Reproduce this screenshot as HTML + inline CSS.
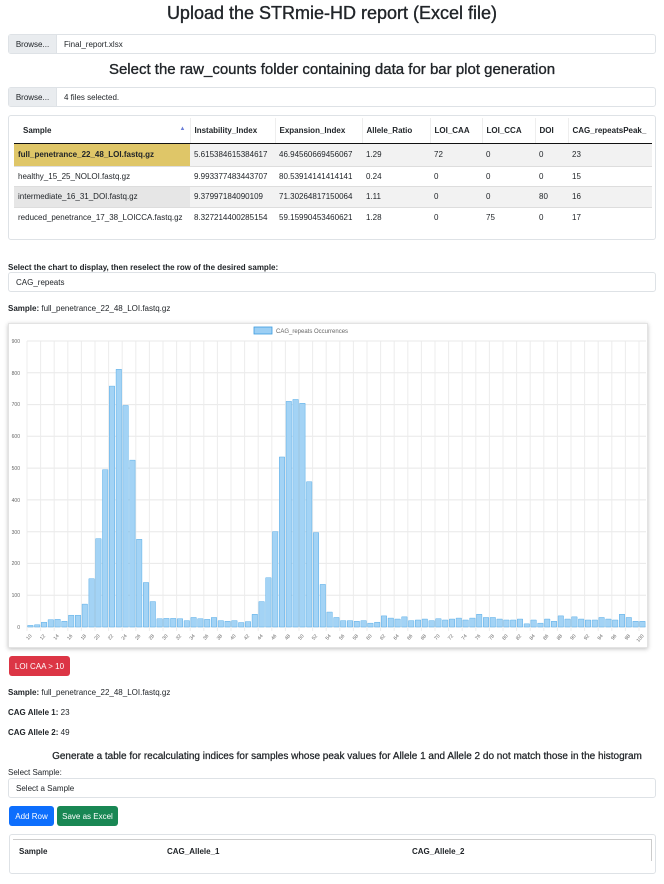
<!DOCTYPE html>
<html><head><meta charset="utf-8"><style>
*{box-sizing:border-box;margin:0;padding:0}
body{width:664px;height:884px;background:#fff;font-family:"Liberation Sans",sans-serif;color:#212529;position:relative;overflow:hidden;font-size:8px}
.a{position:absolute}
h1{position:absolute;left:0;width:664px;text-align:center;font-size:18px;font-weight:normal;color:#212529;-webkit-text-stroke:0.35px #212529}
.file{position:absolute;left:8px;width:648px;height:20px;border:1px solid #dee2e6;border-radius:3px;display:flex;align-items:center}
.file .b{width:48px;height:100%;background:#e9ecef;border-right:1px solid #dee2e6;display:flex;align-items:center;justify-content:center;font-size:8px}
.file .t{padding-left:7px;font-size:8px}
table{border-collapse:collapse;font-size:8px}
td,th{text-align:left;padding:0 4px;white-space:nowrap;overflow:hidden}
th{font-weight:bold;height:25px;border-bottom:1.5px solid #111;border-right:1px solid #eee}
td{border-top:1px solid #ddd}
.btn{position:absolute;color:#fff;font-size:8px;border-radius:3px;display:flex;align-items:center;justify-content:center}
</style></head><body>
<h1 style="top:3px">Upload the STRmie-HD report (Excel file)</h1>
<div class="file" style="top:34px"><div class="b">Browse...</div><div class="t">Final_report.xlsx</div></div>
<h1 style="top:61px;font-size:15px">Select the raw_counts folder containing data for bar plot generation</h1>
<div class="file" style="top:87px"><div class="b">Browse...</div><div class="t">4 files selected.</div></div>

<div class="a" style="left:8px;top:115px;width:648px;height:125px;border:1px solid #dee2e6;border-radius:3px"></div>
<table class="a" style="left:14px;top:118px;width:638px;table-layout:fixed">
<colgroup><col style="width:176px"><col style="width:85px"><col style="width:87px"><col style="width:68px"><col style="width:52px"><col style="width:53px"><col style="width:33px"><col style="width:84px"></colgroup>
<tr><th style="padding-left:9px">Sample <span style="float:right;color:#6b7fd8;font-size:6px">▲</span></th><th>Instability_Index</th><th>Expansion_Index</th><th>Allele_Ratio</th><th>LOI_CAA</th><th>LOI_CCA</th><th>DOI</th><th style="border-right:none">CAG_repeatsPeak_</th></tr>
<tr style="height:23px;background:#f2f2f2"><td style="background:#dfc668;font-weight:bold">full_penetrance_22_48_LOI.fastq.gz</td><td>5.615384615384617</td><td>46.94560669456067</td><td>1.29</td><td>72</td><td>0</td><td>0</td><td>23</td></tr>
<tr style="height:20px"><td>healthy_15_25_NOLOI.fastq.gz</td><td>9.993377483443707</td><td>80.53914141414141</td><td>0.24</td><td>0</td><td>0</td><td>0</td><td>15</td></tr>
<tr style="height:21px;background:#f2f2f2"><td style="background:#e6e6e6">intermediate_16_31_DOI.fastq.gz</td><td>9.37997184090109</td><td>71.30264817150064</td><td>1.11</td><td>0</td><td>0</td><td>80</td><td>16</td></tr>
<tr style="height:21px"><td>reduced_penetrance_17_38_LOICCA.fastq.gz</td><td>8.327214400285154</td><td>59.15990453460621</td><td>1.28</td><td>0</td><td>75</td><td>0</td><td>17</td></tr>
</table>

<div class="a" style="left:8px;top:263px;font-weight:bold">Select the chart to display, then reselect the row of the desired sample:</div>
<div class="file" style="top:272px;height:20px"><div class="t" style="padding-left:7px">CAG_repeats</div></div>
<div class="a" style="left:8px;top:304px"><b>Sample:</b> full_penetrance_22_48_LOI.fastq.gz</div>

<div class="a" style="left:8px;top:323px;width:640px;height:325px;border:1px solid #e3e3e3;box-shadow:0 1px 4px rgba(0,0,0,.25);background:#fff"></div>
<svg class="a" style="left:0;top:0" width="664" height="660" viewBox="0 0 664 660">
<g stroke="#e8e8e8" stroke-width="1">
<line x1="27" x2="646" y1="341" y2="341"/><line x1="27" x2="646" y1="372.8" y2="372.8"/><line x1="27" x2="646" y1="404.6" y2="404.6"/><line x1="27" x2="646" y1="436.3" y2="436.3"/><line x1="27" x2="646" y1="468.1" y2="468.1"/><line x1="27" x2="646" y1="499.9" y2="499.9"/><line x1="27" x2="646" y1="531.7" y2="531.7"/><line x1="27" x2="646" y1="563.4" y2="563.4"/><line x1="27" x2="646" y1="595.2" y2="595.2"/><line x1="27" x2="646" y1="627" y2="627"/>
</g>
<g stroke="#ececec" stroke-width="1">
<path d="M27 341V631M40.6 341V631M54.2 341V631M67.8 341V631M81.4 341V631M95 341V631M108.6 341V631M122.2 341V631M135.8 341V631M149.4 341V631M163 341V631M176.6 341V631M190.2 341V631M203.8 341V631M217.4 341V631M231 341V631M244.6 341V631M258.2 341V631M271.8 341V631M285.4 341V631M299 341V631M312.6 341V631M326.2 341V631M339.8 341V631M353.4 341V631M367 341V631M380.6 341V631M394.2 341V631M407.8 341V631M421.4 341V631M435 341V631M448.6 341V631M462.2 341V631M475.8 341V631M489.4 341V631M503 341V631M516.6 341V631M530.2 341V631M543.8 341V631M557.4 341V631M571 341V631M584.6 341V631M598.2 341V631M611.8 341V631M625.4 341V631M639 341V631"/>
</g>
<g font-size="5" fill="#666" text-anchor="end">
<text x="20" y="343">900</text><text x="20" y="375">800</text><text x="20" y="406">700</text><text x="20" y="438">600</text><text x="20" y="470">500</text><text x="20" y="502">400</text><text x="20" y="534">300</text><text x="20" y="565">200</text><text x="20" y="597">100</text><text x="20" y="629">0</text>
</g>
<rect x="254" y="327" width="18" height="7" fill="#9ccff4" stroke="#3b9be0" stroke-width=".8"/>
<text x="276" y="333" font-size="6" fill="#666">CAG_repeats Occurrences</text>
<g transform="translate(27,627) scale(6.8,-0.3178)" fill="#a3d3f5" stroke="#5aaee8" stroke-width=".5">
<path vector-effect="non-scaling-stroke" d="
M0.1 0h0.8v5h-0.8z M1.1 0h0.8v7h-0.8z M2.1 0h0.8v15h-0.8z M3.1 0h0.8v23h-0.8z M4.1 0h0.8v24h-0.8z M5.1 0h0.8v18h-0.8z M6.1 0h0.8v37h-0.8z M7.1 0h0.8v37h-0.8z M8.1 0h0.8v72h-0.8z M9.1 0h0.8v152h-0.8z
M10.1 0h0.8v278h-0.8z M11.1 0h0.8v495h-0.8z M12.1 0h0.8v758h-0.8z M13.1 0h0.8v811h-0.8z M14.1 0h0.8v697h-0.8z M15.1 0h0.8v525h-0.8z M16.1 0h0.8v276h-0.8z M17.1 0h0.8v140h-0.8z M18.1 0h0.8v80h-0.8z M19.1 0h0.8v26h-0.8z
M20.1 0h0.8v27h-0.8z M21.1 0h0.8v27h-0.8z M22.1 0h0.8v26h-0.8z M23.1 0h0.8v20h-0.8z M24.1 0h0.8v30h-0.8z M25.1 0h0.8v26h-0.8z M26.1 0h0.8v24h-0.8z M27.1 0h0.8v30h-0.8z M28.1 0h0.8v20h-0.8z M29.1 0h0.8v18h-0.8z
M30.1 0h0.8v20h-0.8z M31.1 0h0.8v14h-0.8z M32.1 0h0.8v17h-0.8z M33.1 0h0.8v40h-0.8z M34.1 0h0.8v80h-0.8z M35.1 0h0.8v155h-0.8z M36.1 0h0.8v300h-0.8z M37.1 0h0.8v535h-0.8z M38.1 0h0.8v710h-0.8z M39.1 0h0.8v716h-0.8z
M40.1 0h0.8v704h-0.8z M41.1 0h0.8v457h-0.8z M42.1 0h0.8v297h-0.8z M43.1 0h0.8v134h-0.8z M44.1 0h0.8v47h-0.8z M45.1 0h0.8v30h-0.8z M46.1 0h0.8v20h-0.8z M47.1 0h0.8v20h-0.8z M48.1 0h0.8v18h-0.8z M49.1 0h0.8v20h-0.8z
M50.1 0h0.8v12h-0.8z M51.1 0h0.8v15h-0.8z M52.1 0h0.8v35h-0.8z M53.1 0h0.8v28h-0.8z M54.1 0h0.8v25h-0.8z M55.1 0h0.8v32h-0.8z M56.1 0h0.8v20h-0.8z M57.1 0h0.8v22h-0.8z M58.1 0h0.8v25h-0.8z M59.1 0h0.8v20h-0.8z
M60.1 0h0.8v26h-0.8z M61.1 0h0.8v22h-0.8z M62.1 0h0.8v25h-0.8z M63.1 0h0.8v28h-0.8z M64.1 0h0.8v22h-0.8z M65.1 0h0.8v28h-0.8z M66.1 0h0.8v40h-0.8z M67.1 0h0.8v30h-0.8z M68.1 0h0.8v30h-0.8z M69.1 0h0.8v25h-0.8z
M70.1 0h0.8v22h-0.8z M71.1 0h0.8v22h-0.8z M72.1 0h0.8v25h-0.8z M73.1 0h0.8v10h-0.8z M74.1 0h0.8v22h-0.8z M75.1 0h0.8v12h-0.8z M76.1 0h0.8v25h-0.8z M77.1 0h0.8v18h-0.8z M78.1 0h0.8v35h-0.8z M79.1 0h0.8v25h-0.8z
M80.1 0h0.8v32h-0.8z M81.1 0h0.8v25h-0.8z M82.1 0h0.8v22h-0.8z M83.1 0h0.8v22h-0.8z M84.1 0h0.8v30h-0.8z M85.1 0h0.8v25h-0.8z M86.1 0h0.8v22h-0.8z M87.1 0h0.8v40h-0.8z M88.1 0h0.8v30h-0.8z M89.1 0h0.8v18h-0.8z
M90.1 0h0.8v18h-0.8z"/>
</g>
<g font-size="5" fill="#666" text-anchor="end">
<text transform="translate(32,636) rotate(-50)">10</text><text transform="translate(45.6,636) rotate(-50)">12</text><text transform="translate(59.2,636) rotate(-50)">14</text><text transform="translate(72.8,636) rotate(-50)">16</text><text transform="translate(86.4,636) rotate(-50)">18</text><text transform="translate(100,636) rotate(-50)">20</text><text transform="translate(113.6,636) rotate(-50)">22</text><text transform="translate(127.2,636) rotate(-50)">24</text><text transform="translate(140.8,636) rotate(-50)">26</text><text transform="translate(154.4,636) rotate(-50)">28</text><text transform="translate(168,636) rotate(-50)">30</text><text transform="translate(181.6,636) rotate(-50)">32</text><text transform="translate(195.2,636) rotate(-50)">34</text><text transform="translate(208.8,636) rotate(-50)">36</text><text transform="translate(222.4,636) rotate(-50)">38</text><text transform="translate(236,636) rotate(-50)">40</text><text transform="translate(249.6,636) rotate(-50)">42</text><text transform="translate(263.2,636) rotate(-50)">44</text><text transform="translate(276.8,636) rotate(-50)">46</text><text transform="translate(290.4,636) rotate(-50)">48</text><text transform="translate(304,636) rotate(-50)">50</text><text transform="translate(317.6,636) rotate(-50)">52</text><text transform="translate(331.2,636) rotate(-50)">54</text><text transform="translate(344.8,636) rotate(-50)">56</text><text transform="translate(358.4,636) rotate(-50)">58</text><text transform="translate(372,636) rotate(-50)">60</text><text transform="translate(385.6,636) rotate(-50)">62</text><text transform="translate(399.2,636) rotate(-50)">64</text><text transform="translate(412.8,636) rotate(-50)">66</text><text transform="translate(426.4,636) rotate(-50)">68</text><text transform="translate(440,636) rotate(-50)">70</text><text transform="translate(453.6,636) rotate(-50)">72</text><text transform="translate(467.2,636) rotate(-50)">74</text><text transform="translate(480.8,636) rotate(-50)">76</text><text transform="translate(494.4,636) rotate(-50)">78</text><text transform="translate(508,636) rotate(-50)">80</text><text transform="translate(521.6,636) rotate(-50)">82</text><text transform="translate(535.2,636) rotate(-50)">84</text><text transform="translate(548.8,636) rotate(-50)">86</text><text transform="translate(562.4,636) rotate(-50)">88</text><text transform="translate(576,636) rotate(-50)">90</text><text transform="translate(589.6,636) rotate(-50)">92</text><text transform="translate(603.2,636) rotate(-50)">94</text><text transform="translate(616.8,636) rotate(-50)">96</text><text transform="translate(630.4,636) rotate(-50)">98</text><text transform="translate(644,636) rotate(-50)">100</text>
</g>
</svg>

<div class="btn" style="left:9px;top:656px;width:61px;height:20px;background:#dc3545">LOI CAA &gt; 10</div>
<div class="a" style="left:8px;top:688px"><b>Sample:</b> full_penetrance_22_48_LOI.fastq.gz</div>
<div class="a" style="left:8px;top:708px"><b>CAG Allele 1:</b> 23</div>
<div class="a" style="left:8px;top:728px"><b>CAG Allele 2:</b> 49</div>
<div class="a" style="left:0;top:751px;width:664px;text-align:center;font-size:10px;padding-left:30px;-webkit-text-stroke:0.25px #212529">Generate a table for recalculating indices for samples whose peak values for Allele 1 and Allele 2 do not match those in the histogram</div>
<div class="a" style="left:8px;top:768px">Select Sample:</div>
<div class="file" style="top:778px"><div class="t">Select a Sample</div></div>
<div class="btn" style="left:9px;top:806px;width:45px;height:20px;background:#0d6efd">Add Row</div>
<div class="btn" style="left:57px;top:806px;width:61px;height:20px;background:#198754">Save as Excel</div>
<div class="a" style="left:9px;top:834px;width:647px;height:40px;border:1px solid #dee2e6;border-radius:3px"></div>
<div class="a" style="left:13px;top:839px;width:639px;height:22px;border-top:1px solid #ccc;border-right:1px solid #ccc"></div>
<div class="a" style="left:19px;top:847px;font-weight:bold">Sample</div>
<div class="a" style="left:167px;top:847px;font-weight:bold">CAG_Allele_1</div>
<div class="a" style="left:412px;top:847px;font-weight:bold">CAG_Allele_2</div>
</body></html>
